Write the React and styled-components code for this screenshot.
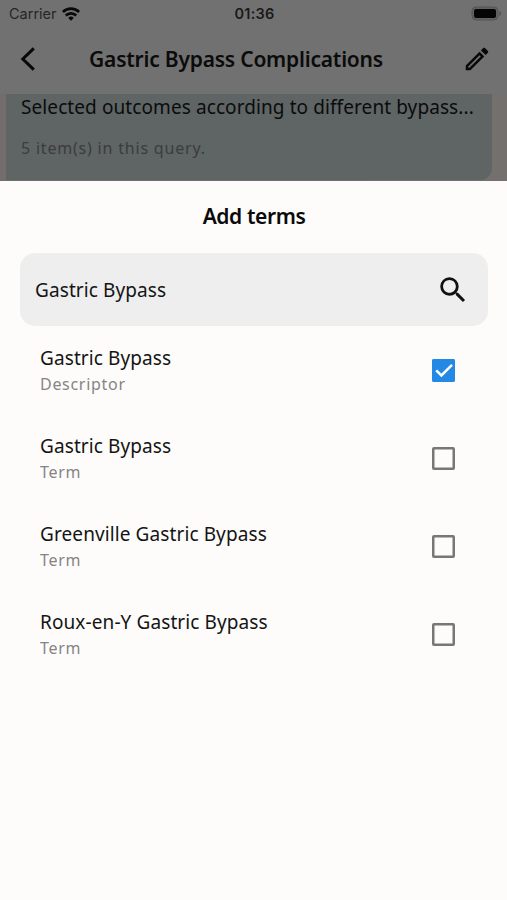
import React from 'react'
import styled, { createGlobalStyle } from 'styled-components'

const GlobalStyle = createGlobalStyle`
  * {
    box-sizing: border-box;
  }

  body {
    margin: 0;
    background: #fdfcfa;
    font-family: 'Noto Sans', sans-serif;
    color: #141414;
  }

  p, h1, h2 {
    margin: 0;
  }
`

const Screen = styled.div`
  display: flex;
  flex-direction: column;
  width: 507px;
  height: 900px;
  overflow: hidden;
`

const TopBar = styled.header`
  flex: none;
  height: 94px;
  background: #717171;
`

const StatusBar = styled.div`
  display: grid;
  grid-template-columns: 1fr auto 1fr;
  align-items: center;
  height: 27px;
  padding: 0 7px 0 9px;
  font-family: Inter, sans-serif;
  font-size: 14.5px;
  line-height: 18px;
`

const Carrier = styled.div`
  display: flex;
  align-items: center;
  gap: 5px;
  letter-spacing: 0;
  color: #262626;
`

const Clock = styled.div`
  font-weight: 600;
  letter-spacing: 0.2px;
  color: #1a1a1a;
`

const BatteryIcon = styled.svg`
  justify-self: end;
  margin-right: -2px;
`

const NavBar = styled.div`
  display: grid;
  grid-template-columns: 56px 1fr 91px;
  align-items: center;
  height: 64px;
`

const BackIcon = styled.svg`
  justify-self: center;
`

const EditIcon = styled.svg`
  justify-self: end;
  margin-right: 15px;
`

const NavTitle = styled.h1`
  font-size: 21px;
  line-height: 28px;
  font-weight: 600;
  letter-spacing: -0.22px;
  text-align: center;
  white-space: nowrap;
  color: #0b0b0b;
`

const Backdrop = styled.div`
  flex: none;
  height: 87px;
  padding: 0 15px 1px 6px;
  background: linear-gradient(90deg, #746d6e, #74706d);
`

const QueryCard = styled.div`
  height: 86px;
  padding: 0 15px;
  border-radius: 0 0 12px 0;
  background: #5f6464;
`

const QueryText = styled.p`
  font-size: 19px;
  line-height: 26px;
  letter-spacing: 0.09px;
  white-space: nowrap;
  color: #0b0c0c;
`

const QueryCount = styled.p`
  margin-top: 16px;
  font-size: 16px;
  line-height: 24px;
  letter-spacing: 0.8px;
  color: #3a3d3d;
`

const Sheet = styled.main`
  flex: 1;
  padding: 0 19px 0 20px;
  background: #fdfcfa;
`

const SheetTitle = styled.h2`
  padding: 21px 0 23px;
  font-size: 21px;
  line-height: 28px;
  font-weight: 600;
  letter-spacing: -0.4px;
  text-align: center;
  color: #0a0a0a;
`

const SearchBox = styled.div`
  display: flex;
  align-items: center;
  justify-content: space-between;
  height: 73px;
  padding: 0 18px 0 15px;
  border-radius: 15px;
  background: #eeeeee;
`

const TermName = styled.p`
  font-size: 19px;
  line-height: 26px;
  letter-spacing: 0.1px;
  white-space: nowrap;
`

const TermKind = styled.p`
  font-size: 16px;
  line-height: 26px;
  letter-spacing: 0.7px;
  color: #858585;
`

const TermList = styled.div`
  padding-left: 20px;
`

const TermRow = styled.div`
  display: flex;
  align-items: center;
  justify-content: space-between;
  height: 88px;
  padding-right: 33px;
`

const TermLabel = styled.div`
  padding-top: 2px;
`

const CheckboxBox = styled.span`
  display: flex;
  align-items: center;
  justify-content: center;
  width: 23px;
  height: 23px;
  border-radius: 2px;
  box-shadow: inset 0 0 0 2.5px ${props => props.checked ? '#2489e5' : '#777777'};
  background: ${props => props.checked ? '#2489e5' : 'transparent'};
`

function Checkbox ({ checked }) {
  return (
    <CheckboxBox checked={checked} role='checkbox' aria-checked={checked}>
      {checked && (
        <svg width='18' height='18' viewBox='0 0 18 18'>
          <path d='M1.2 9.3l5.2 5.2L17 3.9' fill='none' stroke='#fff' strokeWidth='2.5' />
        </svg>
      )}
    </CheckboxBox>
  )
}

function WifiIcon () {
  return (
    <svg width='18' height='14' viewBox='0 0 18 14' fill='none' stroke='#080808' strokeWidth='2.7'>
      <path d='M0.9 5a11.6 11.6 0 0 1 16.2 0' />
      <path d='M3.8 8.5a7.4 7.4 0 0 1 10.4 0' />
      <path d='M9 13.7l-2.7-2.8a3.9 3.9 0 0 1 5.4 0z' fill='#080808' stroke='none' />
    </svg>
  )
}

const terms = [
  { name: 'Gastric Bypass', kind: 'Descriptor', checked: true },
  { name: 'Gastric Bypass', kind: 'Term', checked: false },
  { name: 'Greenville Gastric Bypass', kind: 'Term', checked: false },
  { name: 'Roux-en-Y Gastric Bypass', kind: 'Term', checked: false }
]

export default function App () {
  return (
    <>
      <GlobalStyle />
      <Screen>
        <TopBar>
          <StatusBar>
            <Carrier>Carrier <WifiIcon /></Carrier>
            <Clock>01:36</Clock>
            <BatteryIcon width='31' height='15' viewBox='0 0 31 15'>
              <rect x='1' y='1' width='26' height='13' rx='4' fill='#626262' stroke='#555' />
              <rect x='3' y='3' width='22' height='9' rx='2' fill='#050505' />
              <path d='M28.5 5c2 .8 2 4.2 0 5z' fill='#505050' />
            </BatteryIcon>
          </StatusBar>
          <NavBar>
            <BackIcon width='20' height='26' viewBox='0 0 20 26'>
              <path d='M15.8 2.3L4.8 13l11 10.7' fill='none' stroke='#080808' strokeWidth='3' />
            </BackIcon>
            <NavTitle>Gastric Bypass Complications</NavTitle>
            <EditIcon width='30' height='30' viewBox='0 0 24 24' fill='#080808'>
              <path d='M14.06 9.02l.92.92L5.92 19H5v-.92l9.06-9.06M17.66 3c-.25 0-.51.1-.7.29l-1.83 1.83 3.75 3.75 1.83-1.83c.39-.39.39-1.02 0-1.41l-2.34-2.34c-.2-.2-.45-.29-.71-.29zm-3.6 3.19L3 17.25V21h3.75L17.81 9.94l-3.75-3.75z' />
            </EditIcon>
          </NavBar>
        </TopBar>
        <Backdrop>
          <QueryCard>
            <QueryText>Selected outcomes according to different bypass...</QueryText>
            <QueryCount>5 item(s) in this query.</QueryCount>
          </QueryCard>
        </Backdrop>
        <Sheet>
          <SheetTitle>Add terms</SheetTitle>
          <SearchBox>
            <TermName>Gastric Bypass</TermName>
            <svg width='34' height='34' viewBox='0 0 24 24' fill='#111'>
              <path d='M15.5 14h-.79l-.28-.27A6.471 6.471 0 0 0 16 9.5 6.5 6.5 0 1 0 9.5 16c1.61 0 3.09-.59 4.23-1.57l.27.28v.79l5 4.99L20.49 19l-4.99-5zm-6 0C7.01 14 5 11.99 5 9.5S7.01 5 9.5 5 14 7.01 14 9.5 11.99 14 9.5 14z' />
            </svg>
          </SearchBox>
          <TermList>
            {terms.map((term, i) => (
              <TermRow key={i}>
                <TermLabel>
                  <TermName>{term.name}</TermName>
                  <TermKind>{term.kind}</TermKind>
                </TermLabel>
                <Checkbox checked={term.checked} />
              </TermRow>
            ))}
          </TermList>
        </Sheet>
      </Screen>
    </>
  )
}
